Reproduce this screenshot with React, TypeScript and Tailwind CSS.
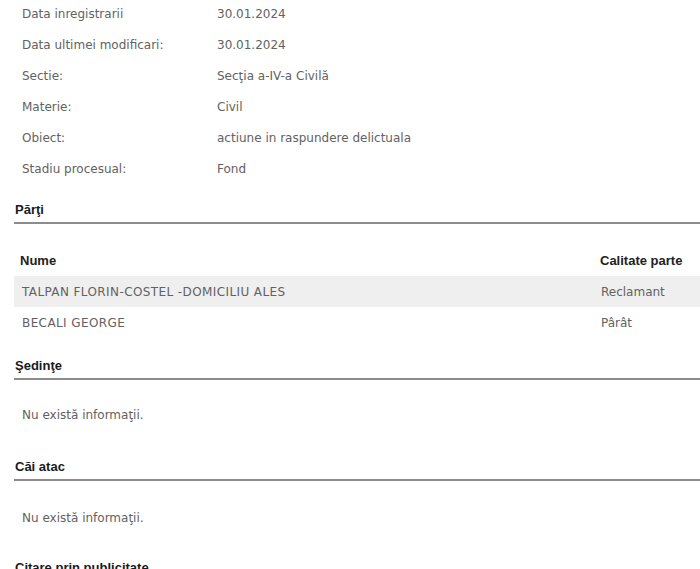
import React from "react";

const info: [string, string][] = [
  ["Data inregistrarii", "30.01.2024"],
  ["Data ultimei modificari:", "30.01.2024"],
  ["Sectie:", "Secţia a-IV-a Civilă"],
  ["Materie:", "Civil"],
  ["Obiect:", "actiune in raspundere delictuala"],
  ["Stadiu procesual:", "Fond"],
];

const parti = [
  { nume: "TALPAN FLORIN-COSTEL -DOMICILIU ALES", calitate: "Reclamant" },
  { nume: "BECALI GEORGE", calitate: "Pârât" },
];

const body = "font-['DejaVu_Sans',sans-serif] text-[12px] text-[#626262]";

const Heading = ({ title, className = "" }: { title: string; className?: string }) => (
  <div
    className={`border-b-2 border-[#8c8c8c] pb-[4px] pl-[1px] font-['Liberation_Sans',Arial,sans-serif] text-[13px] font-bold leading-[16px] text-[#1a1a1a] ${className}`}
  >
    {title}
  </div>
);

export default function App() {
  return (
    <div className="w-[700px] h-[569px] overflow-hidden bg-white pl-[14px]">
      <div className="-mt-[2px]">
        {info.map(([label, value]) => (
          <div key={label} className={`flex h-[31px] items-center ${body}`}>
            <div className="w-[203px] pl-[8px]">{label}</div>
            <div>{value}</div>
          </div>
        ))}
      </div>

      <Heading title="Părţi" className="mt-[18px]" />

      <div className="mt-[21px]">
        <div className="flex h-[31px] items-center font-['Liberation_Sans',Arial,sans-serif] text-[13px] font-bold text-[#222]">
          <div className="flex-1 pl-[6px]">Nume</div>
          <div className="w-[100px]">Calitate parte</div>
        </div>
        {parti.map((p, i) => (
          <div
            key={p.nume}
            className={`flex h-[31px] items-center ${body} ${i === 0 ? "bg-[#efefef]" : ""}`}
          >
            <div className="flex-1 pl-[8px] tracking-[0.4px]">{p.nume}</div>
            <div className="w-[100px] pl-[1px]">{p.calitate}</div>
          </div>
        ))}
      </div>

      <Heading title="Şedinţe" className="mt-[20px]" />
      <div className={`mt-[19px] flex h-[31px] items-center pl-[8px] ${body}`}>Nu există informaţii.</div>

      <Heading title="Căi atac" className="mt-[29px]" />
      <div className={`mt-[21px] flex h-[31px] items-center pl-[8px] ${body}`}>Nu există informaţii.</div>

      <Heading title="Citare prin publicitate" className="mt-[27px]" />
    </div>
  );
}
